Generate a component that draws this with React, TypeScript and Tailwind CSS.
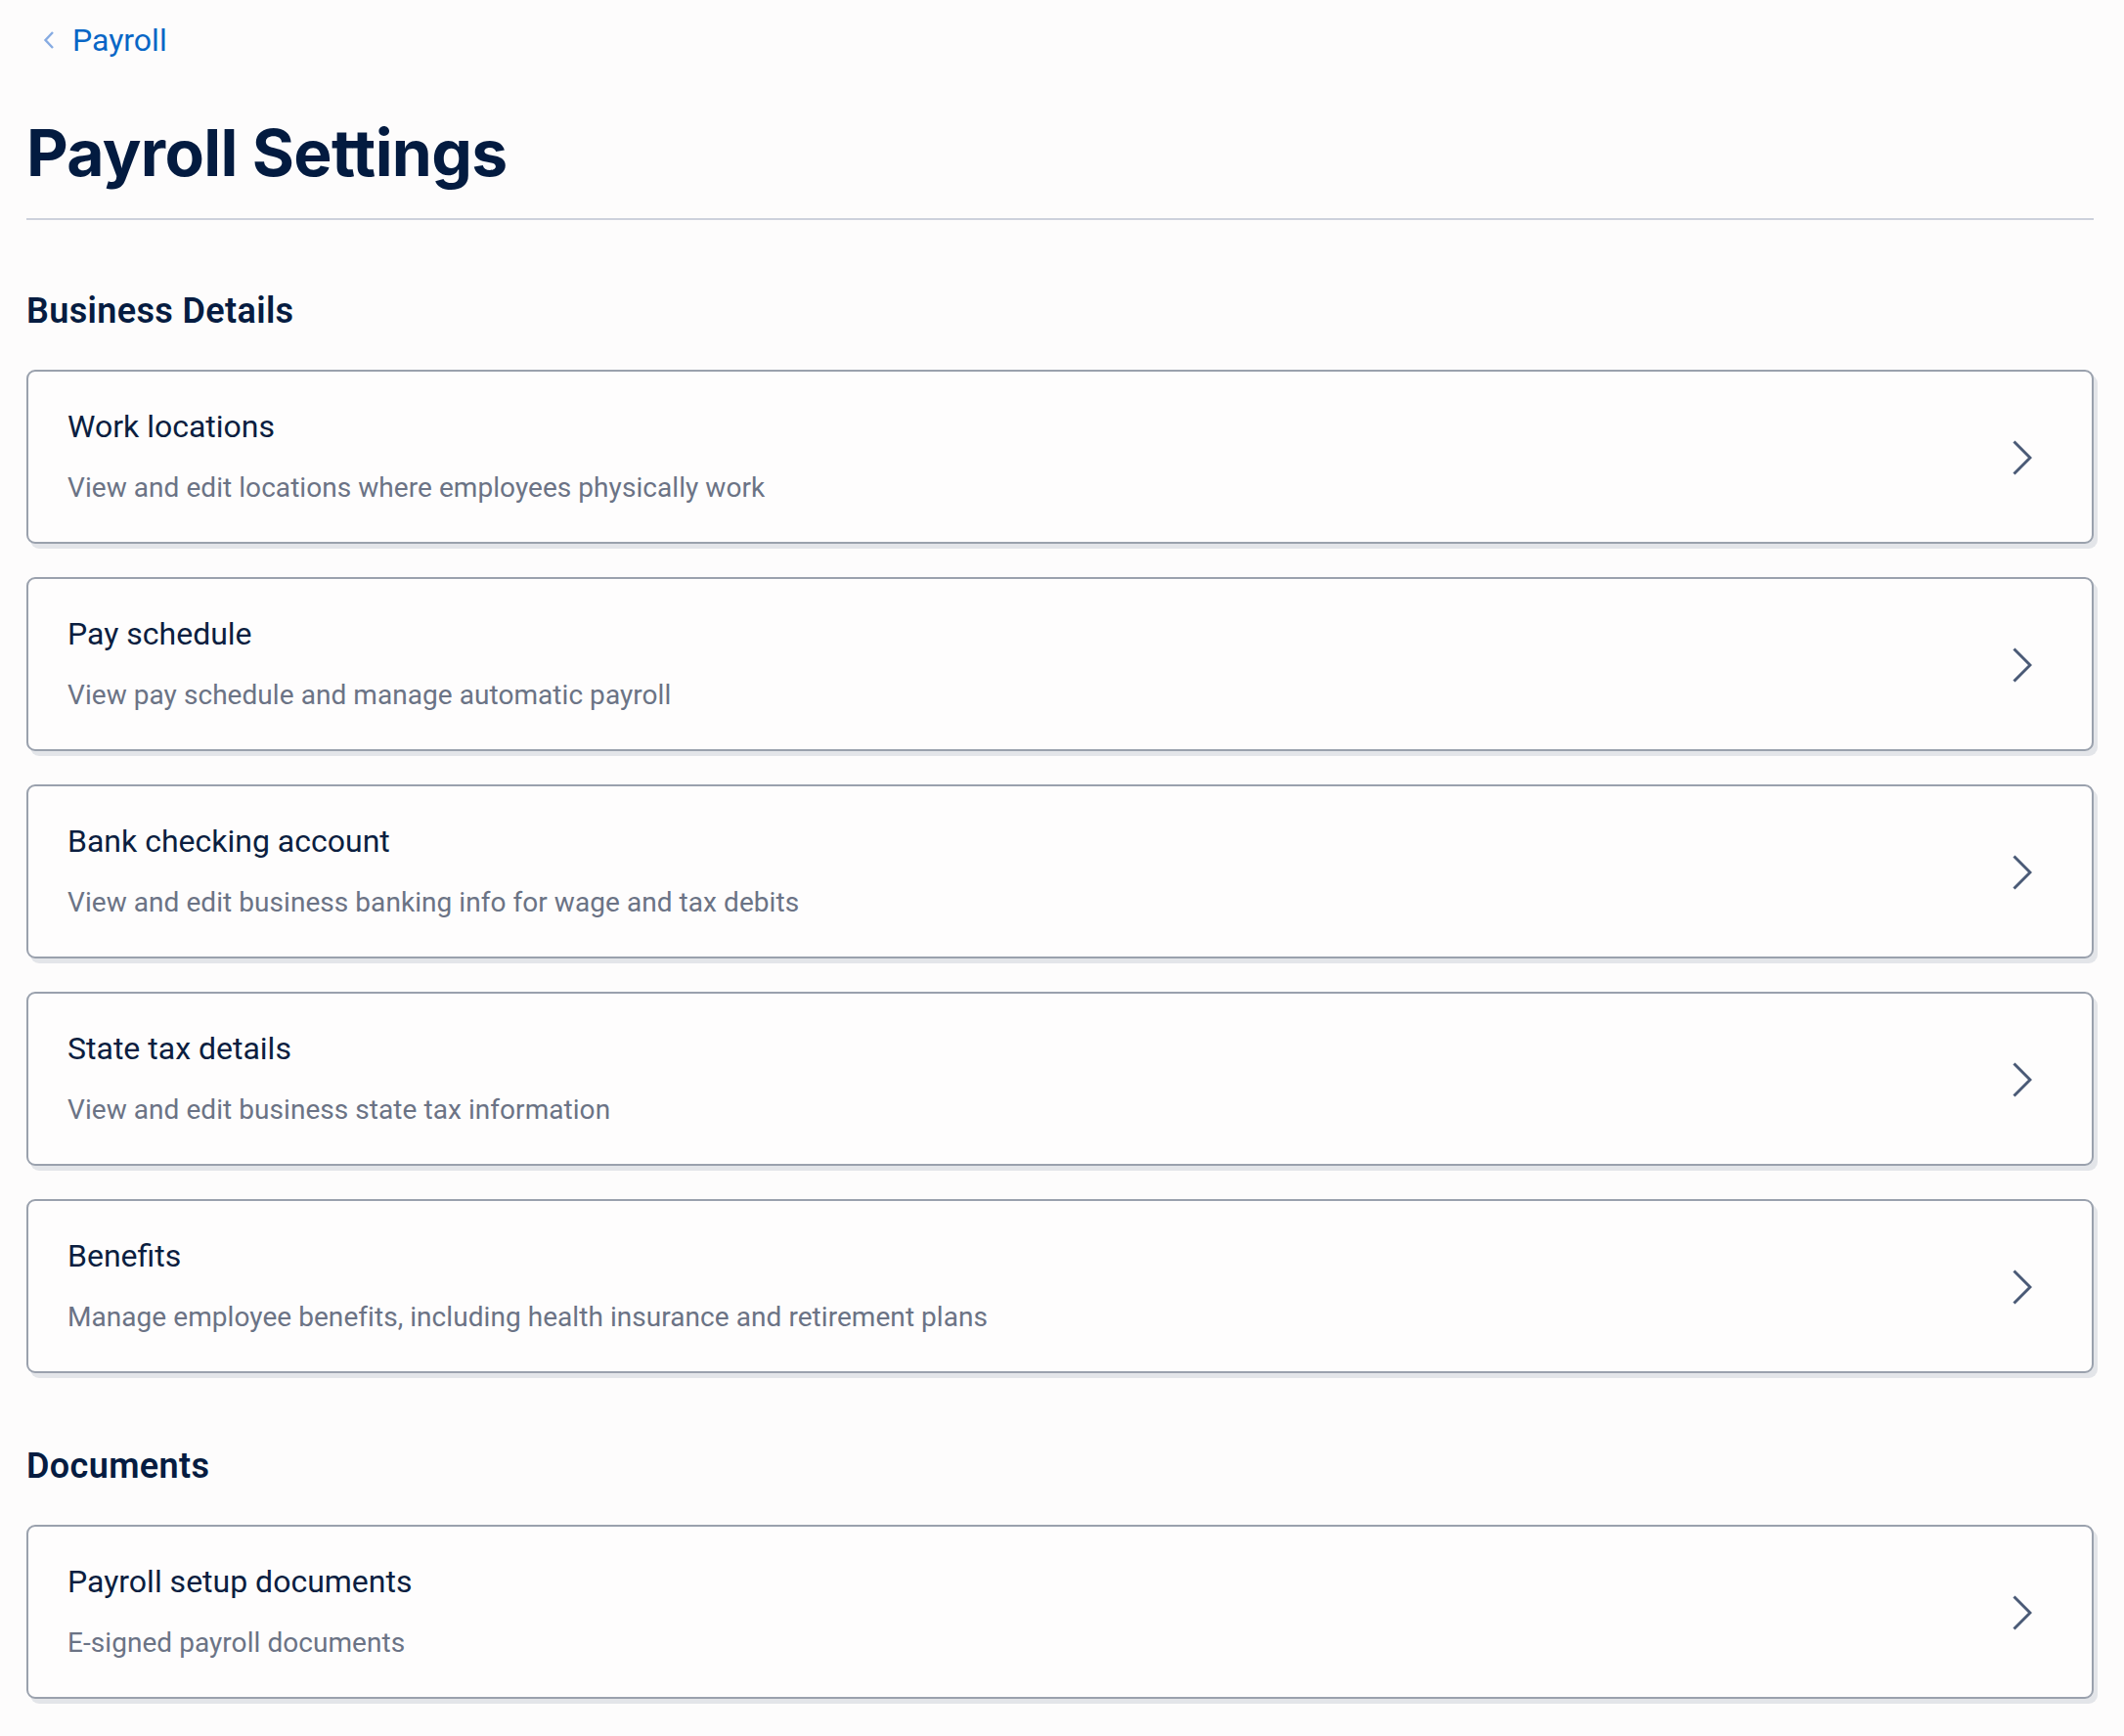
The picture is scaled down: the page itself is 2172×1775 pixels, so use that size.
import React from 'react'

type Item = { title: string; desc: string }

const businessItems: Item[] = [
  { title: 'Work locations', desc: 'View and edit locations where employees physically work' },
  { title: 'Pay schedule', desc: 'View pay schedule and manage automatic payroll' },
  { title: 'Bank checking account', desc: 'View and edit business banking info for wage and tax debits' },
  { title: 'State tax details', desc: 'View and edit business state tax information' },
  { title: 'Benefits', desc: 'Manage employee benefits, including health insurance and retirement plans' },
]

const documentItems: Item[] = [
  { title: 'Payroll setup documents', desc: 'E-signed payroll documents' },
]

function ChevronRight() {
  return (
    <svg width="20" height="36" viewBox="0 0 20 36" fill="none" className="mt-[4px] shrink-0">
      <polyline points="1.5,1.5 18,18 1.5,34.5" stroke="#4a5a76" strokeWidth="3" strokeLinejoin="miter" />
    </svg>
  )
}

function SettingsCard({ item }: { item: Item }) {
  return (
    <button className="flex w-full items-center justify-between rounded-[9px] border-2 border-[#9aa1ad] bg-[#fefdfd] pb-[35px] pl-[40px] pr-[61px] pt-[32px] text-left shadow-[4px_5px_0_#e3e5e9]">
      <div className="flex flex-col">
        <span className="text-[32px] leading-[48px] text-[#0b1e40]">{item.title}</span>
        <span className="mt-[19px] text-[28px] leading-[40px] tracking-[0.002em] text-[#6b7385]">{item.desc}</span>
      </div>
      <ChevronRight />
    </button>
  )
}

function Section({ title, items }: { title: string; items: Item[] }) {
  return (
    <section className="flex flex-col">
      <h2 className="text-[36px] font-semibold leading-[48px] tracking-[0.01em] text-[#061c41]">{title}</h2>
      <div className="mt-[36px] flex flex-col gap-[34px]">
        {items.map((item) => (
          <SettingsCard key={item.title} item={item} />
        ))}
      </div>
    </section>
  )
}

export default function App() {
  return (
    <div
      className="min-h-screen bg-[#fdfcfc] pb-[40px] pl-[27px] pr-[31px] pt-[17px]"
      style={{ fontFamily: 'Roboto, "Noto Sans", Arial, sans-serif' }}
    >
      <a href="#" className="flex items-center gap-[18px] pl-[17px] text-[32px] leading-[48px] text-[#0866c6]">
        <svg width="12" height="20" viewBox="0 0 12 20" fill="none">
          <polyline points="10,2 2.5,10 10,18" stroke="#86abe2" strokeWidth="2.4" />
        </svg>
        Payroll
      </a>

      <div className="mt-[51px] border-b-2 border-[#cdd1dc] pb-[27px]">
        <h1
          className="text-[66px] font-bold leading-[80px] tracking-[-0.01em] text-[#031b40]"
          style={{ fontFamily: 'Inter, "Liberation Sans", sans-serif' }}
        >
          Payroll Settings
        </h1>
      </div>

      <div className="mt-[69px] flex flex-col gap-[71px]">
        <Section title="Business Details" items={businessItems} />
        <Section title="Documents" items={documentItems} />
      </div>
    </div>
  )
}
